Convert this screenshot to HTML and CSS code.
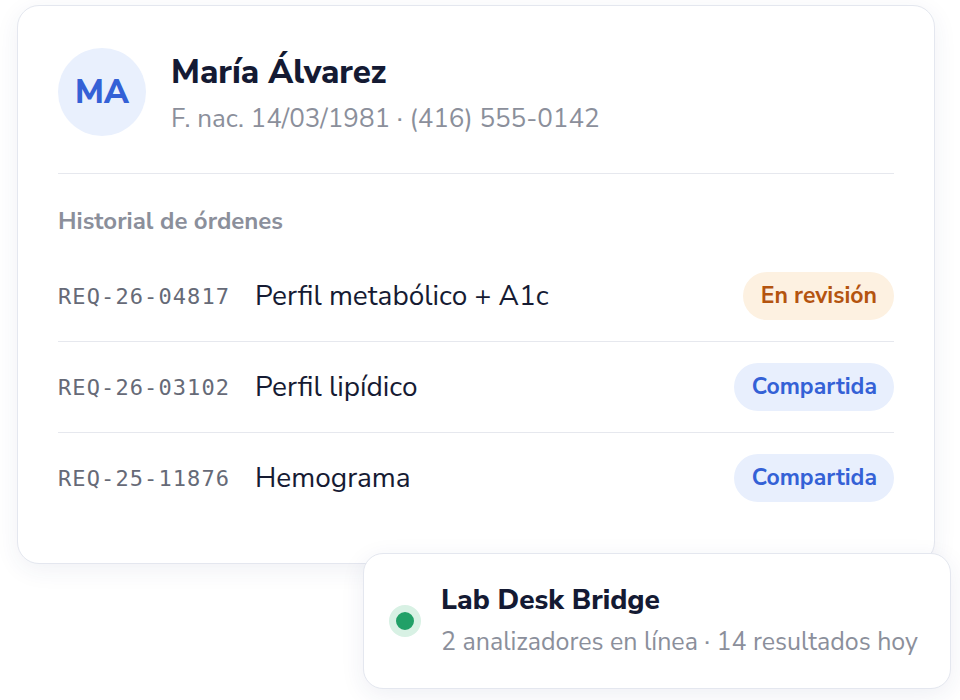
FILE: index.html
```html
<!DOCTYPE html>
<html lang="es">
<head>
  <meta charset="UTF-8">
  <meta name="viewport" content="width=device-width, initial-scale=1.0">
  <title>Paciente - Historial de órdenes</title>
  <link rel="stylesheet" href="styles.css">
</head>
<body>
  <div class="stage">
    <div class="patient-card">
      <div class="patient-header">
        <div class="avatar">MA</div>
        <div class="patient-info">
          <h1>María Álvarez</h1>
          <div class="patient-meta">F. nac. 14/03/1981 · (416) 555-0142</div>
        </div>
      </div>

      <div class="section-title">Historial de órdenes</div>
      <ul class="orders">
        <li class="order">
          <span class="order-id">REQ-26-04817</span>
          <span class="order-name">Perfil metabólico + A1c</span>
          <span class="status status-review">En revisión</span>
        </li>
        <li class="order">
          <span class="order-id">REQ-26-03102</span>
          <span class="order-name">Perfil lipídico</span>
          <span class="status status-shared">Compartida</span>
        </li>
        <li class="order">
          <span class="order-id">REQ-25-11876</span>
          <span class="order-name">Hemograma</span>
          <span class="status status-shared">Compartida</span>
        </li>
      </ul>
    </div>

    <div class="bridge-card">
      <span class="bridge-dot"></span>
      <div class="bridge-info">
        <div class="bridge-title">Lab Desk Bridge</div>
        <div class="bridge-meta">2 analizadores en línea · 14 resultados hoy</div>
      </div>
    </div>
  </div>
</body>
</html>
```

FILE: styles.css
```css
body {
  font-family: 'Nunito Sans', 'Open Sans', sans-serif;
  background-color: #ffffff;
  margin: 0;
  padding: 0;
  color: #161b33;
}
.stage {
  position: relative;
  padding: 5px 0 0 17px;
  height: 695px;
}
.patient-card {
  width: 836px;
  background-color: #ffffff;
  border: 1px solid #e4e7ef;
  border-radius: 22px;
  box-shadow: 0 6px 24px rgba(40, 52, 110, 0.07);
  padding: 42px 40px 40px;
}
.patient-header {
  display: flex;
  align-items: center;
  gap: 25px;
  padding-bottom: 37px;
  border-bottom: 1px solid #e6e8ee;
}
.avatar {
  width: 88px;
  height: 88px;
  border-radius: 50%;
  background-color: #e9f0fd;
  color: #3461d6;
  font-weight: 800;
  font-size: 33px;
  display: flex;
  align-items: center;
  justify-content: center;
  flex-shrink: 0;
}
.patient-info {
  margin-top: 4px;
}
.patient-info h1 {
  margin: 0 0 9px;
  font-size: 33px;
  font-weight: 800;
  line-height: 40px;
  color: #141a33;
}
.patient-meta {
  font-size: 26px;
  line-height: 34px;
  color: #8b8f9b;
}
.section-title {
  margin-top: 31px;
  font-size: 24px;
  line-height: 32px;
  font-weight: 700;
  color: #8b8f9b;
}
.orders {
  list-style: none;
  margin: 14px 0 0;
  padding: 0;
}
.order {
  display: flex;
  align-items: center;
  height: 90px;
  border-bottom: 1px solid #e6e8ee;
}
.order:last-child {
  border-bottom: none;
}
.order-id {
  font-family: 'DejaVu Sans Mono', 'Liberation Mono', monospace;
  font-size: 22px;
  letter-spacing: 1.1px;
  color: #666a77;
  width: 197px;
  flex-shrink: 0;
}
.order-name {
  flex: 1;
  font-size: 28px;
  color: #161b33;
}
.status {
  padding: 0 17px 0 18px;
  height: 48px;
  line-height: 48px;
  border-radius: 24px;
  font-size: 23px;
  font-weight: 700;
}
.status-review {
  background-color: #fdf1e1;
  color: #b4540f;
}
.status-shared {
  background-color: #e8effd;
  color: #3461d6;
}
.bridge-card {
  position: absolute;
  left: 363px;
  top: 553px;
  display: flex;
  align-items: center;
  gap: 20px;
  background-color: #ffffff;
  border: 1px solid #e4e7ef;
  border-radius: 20px;
  box-shadow: 0 6px 24px rgba(40, 52, 110, 0.08);
  padding: 28px 32px 29px 25px;
}
.bridge-dot {
  width: 18px;
  height: 18px;
  border-radius: 50%;
  background-color: #21a067;
  border: 7px solid #d8f1e4;
  flex-shrink: 0;
}
.bridge-title {
  font-size: 28px;
  font-weight: 800;
  color: #141a33;
  line-height: 36px;
}
.bridge-meta {
  margin-top: 7px;
  font-size: 25px;
  line-height: 34px;
  color: #8b8f9b;
  white-space: nowrap;
}
```
